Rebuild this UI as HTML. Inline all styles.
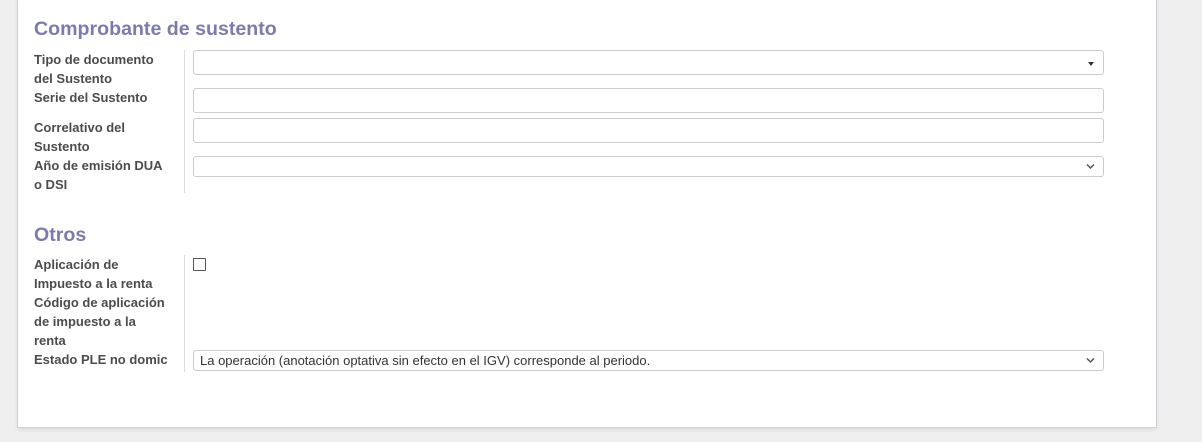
<!DOCTYPE html>
<html><head><meta charset="utf-8"><style>
body{margin:0;width:1202px;height:442px;background:#efefef;position:relative;overflow:hidden;font-family:"Liberation Sans",Arial,sans-serif}
.sheet{position:absolute;left:17px;top:-2px;width:1138px;height:428px;background:#fff;border:1px solid #d0d0d8;box-shadow:0 2px 4px rgba(0,0,0,.08)}
.t{position:absolute;left:34px;font-size:19.6px;font-weight:bold;color:#7c7bad}
.l{position:absolute;left:34px;font-size:13px;font-weight:bold;color:#4c4c4c;line-height:19px;width:145px}
.v{position:absolute;left:184px;width:1px;background:#dcdcdc}
.i{position:absolute;left:193px;width:911px;border:1px solid #ccc;border-radius:3px;background:#fff;box-sizing:border-box;font-size:13px;color:#333;padding-left:6px}
.ch{position:absolute;right:8px;top:50%;margin-top:-4px}
</style></head><body>
<div class="sheet"></div>
<div class="t" style="top:18px">Comprobante de sustento</div>
<div class="l" style="top:50px">Tipo de documento<br>del Sustento</div>
<div class="l" style="top:88px">Serie del Sustento</div>
<div class="l" style="top:118px">Correlativo del<br>Sustento</div>
<div class="l" style="top:156px">Año de emisión DUA<br>o DSI</div>
<div class="v" style="top:50px;height:143px"></div>
<div class="i" style="top:50px;height:25px"><svg class="ch" width="8" height="8" style="margin-top:-2px" viewBox="0 0 8 8"><path d="M1 1h6L4 5z" fill="#333"/></svg></div>
<div class="i" style="top:88px;height:25px"></div>
<div class="i" style="top:118px;height:25px"></div>
<div class="i" style="top:156px;height:21px"><svg class="ch" width="9" height="7" viewBox="0 0 9 7"><path d="M1 1.5l3.5 3.5 3.5-3.5" stroke="#555" stroke-width="1.5" fill="none"/></svg></div>
<div class="t" style="top:224px">Otros</div>
<div class="l" style="top:255px">Aplicación de<br>Impuesto a la renta</div>
<div class="l" style="top:293px">Código de aplicación<br>de impuesto a la<br>renta</div>
<div class="l" style="top:350px">Estado PLE no domic</div>
<div class="v" style="top:255px;height:117px"></div>
<div style="position:absolute;left:193px;top:258px;width:11px;height:11px;border:1px solid #555;border-radius:1px"></div>
<div class="i" style="top:350px;height:21px;line-height:19px">La operación (anotación optativa sin efecto en el IGV) corresponde al periodo.<svg class="ch" width="9" height="7" viewBox="0 0 9 7"><path d="M1 1.5l3.5 3.5 3.5-3.5" stroke="#555" stroke-width="1.5" fill="none"/></svg></div>
</body></html>
